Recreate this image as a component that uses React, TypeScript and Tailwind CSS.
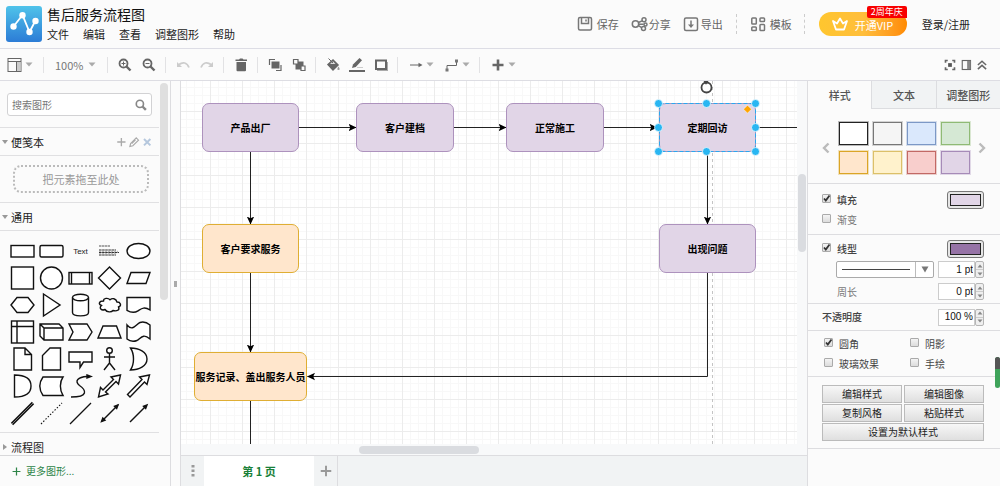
import { useState } from 'react';
import type { ReactNode } from 'react';

interface DiagramNode {
    label: string;
    className: string;
}

const MENUS = ['文件', '编辑', '查看', '调整图形', '帮助'];

const NODES: DiagramNode[] = [
    { label: '产品出厂', className: 'left-[21px] top-[22px] w-[97px] bg-[#e1d5e7] border-[#ad92bd]' },
    { label: '客户建档', className: 'left-[175px] top-[22px] w-[98px] bg-[#e1d5e7] border-[#ad92bd]' },
    { label: '正常施工', className: 'left-[325px] top-[22px] w-[98px] bg-[#e1d5e7] border-[#ad92bd]' },
    { label: '定期回访', className: 'left-[478px] top-[22px] w-[97px] bg-[#e1d5e7] border-[#ad92bd]' },
    { label: '客户要求服务', className: 'left-[21px] top-[143px] w-[97px] bg-[#ffe6cc] border-[#dfae33]' },
    { label: '出现问题', className: 'left-[478px] top-[143px] w-[97px] bg-[#e1d5e7] border-[#ad92bd]' },
    { label: '服务记录、盖出服务人员', className: 'left-[13px] top-[271px] w-[113px] bg-[#ffe6cc] border-[#dfae33]' },
];

const SWATCHES = [
    { name: '白色', className: 'bg-white border-[#222] outline-[#222]/30' },
    { name: '灰色', className: 'bg-[#f5f5f5] border-[#777] outline-[#777]/30' },
    { name: '蓝色', className: 'bg-[#dae8fc] border-[#7c98c6] outline-[#7c98c6]/30' },
    { name: '绿色', className: 'bg-[#d5e8d4] border-[#8fba75] outline-[#8fba75]/30' },
    { name: '橙色', className: 'bg-[#ffe6cc] border-[#dba526] outline-[#dba526]/30' },
    { name: '黄色', className: 'bg-[#fff2cc] border-[#dcc069] outline-[#dcc069]/30' },
    { name: '红色', className: 'bg-[#f8cecc] border-[#c26965] outline-[#c26965]/30' },
    { name: '紫色', className: 'bg-[#e1d5e7] border-[#a68bb8] outline-[#a68bb8]/30' },
];

// Every drawing sits in a 29x27 cell
const SHAPES: ReactNode[] = [
    <rect x="3" y="8.5" width="23" height="11.5" />,
    <rect x="3" y="8.5" width="23" height="11.5" rx="1.5" />,
    <text x="14.5" y="17" textAnchor="middle" fontSize="8" fill="#222" stroke="none" fontFamily="Liberation Sans, sans-serif">Text</text>,
    <g strokeWidth="1.200">
        <path d="M4 9h11" stroke="#555" strokeDasharray="2.500 .5" />
        <path d="M4 13h17M4 15.500h20M4 18h17" stroke="#333" strokeDasharray="2.600 .5" />
        <path d="M4 14.300h19M4 16.800h18" stroke="#999" strokeDasharray="2.200 .8" strokeWidth=".8" />
    </g>,
    <ellipse cx="14.5" cy="14" rx="11.500" ry="7.500" />,
    <rect x="3.5" y="3" width="22" height="22" />,
    <circle cx="14.5" cy="14" r="11" />,
    <g>
        <rect x="3" y="8.500" width="23" height="11.500" />
        <path d="M5.500 8.500v11.500M23.500 8.500v11.500" />
    </g>,
    <path d="M14.500 3L25.500 14 14.500 25 3.500 14z" />,
    <path d="M3 19.500L7 8.500h19l-4 11z" />,
    <path d="M3 14l6-7.500h11L26 14l-6 7.500H9z" />,
    <path d="M6.500 3L23 14 6.500 25z" />,
    <g>
        <path d="M6.500 6.500v15c0 4.500 16 4.500 16 0v-15" />
        <ellipse cx="14.5" cy="6.5" rx="8" ry="3.300" />
    </g>,
    <path d="M8.500 10C4 10 3 13 6.500 14.500 3.500 17 6.500 20 10 18.500c2 3 6.500 3 8 1 4 1 7-.5 5.500-3.500 3.500-1.500 2-5-1.500-5 -1-4-5-4-7-2.200C13 6.500 8.500 7 8.500 10z" />,
    <path d="M3 6.500h23V19c-6-4-9-1-12 .8-3 2-7 2-11-.5z" />,
    <g>
        <rect x="3.500" y="3" width="22" height="22" />
        <path d="M9 3v22M3.500 8.500h22" />
    </g>,
    <path d="M3 6h19l4 4v12H7l-4-4zM3 6l4 4h19M7 10v12" />,
    <path d="M3 6h18l5 8-5 8H3l4-8z" />,
    <path d="M3 20L8 8h13.500L26 20z" />,
    <path d="M3 7c6 7 9-1 13-2.500 4-1.200 7 0 10 2.500v14c-7-6-9-1-13 1.500-4 1.500-7 1-10-1.500z" />,
    <path d="M6 3h11l6.500 6.500V25H6zM17 3v6.500h6.500" />,
    <path d="M13 3h10.500v22H5.500V10.500z" />,
    <path d="M3 7h23v10H17.500l-3.500 5.500V17H3z" />,
    <g>
        <circle cx="14.5" cy="5.500" r="2.800" />
        <path d="M14.500 8.500V18M9 12h11M14.500 18L9 25M14.500 18l5.500 7" />
    </g>,
    <path d="M6.500 3C15 3 23 7 23 14S15 25 6.500 25c4-6 4-16 0-22z" />,
    <path d="M6.500 3C17 3 23 7 23 14S17 25 6.500 25z" />,
    <path d="M6 5h20c-3.500 5-3.500 13 0 18.500H6c-4-6-4-13 0-18.500z" />,
    <g>
        <path d="M5 25c18 0 15-7 8.500-11.500C8 9 12 5 21 4.500" fill="none" />
        <path d="M21 3l4 1.500-4 1.500z" fill="#111" />
    </g>,
    <path d="M25.500 3l-2 9-2.500-2.500L10.500 20l2.500 2-9.500 3 2-9.500 2.500 2.500L18.500 7.500 16 5z" />,
    <path d="M25.500 3l-2.500 9.500-2.500-2.500L6 25l-2.500-2.500L18 7.500 15.500 5z" />,
    <g>
        <path d="M4 25L25 4" strokeWidth="3.200" />
        <path d="M4 25L25 4" stroke="#999" strokeWidth=".8" />
    </g>,
    <path d="M4 25L25 4" strokeDasharray="1.500 1.700" strokeWidth="1.100" />,
    <path d="M4 25L25 4" strokeWidth="1.200" />,
    <g>
        <path d="M7 22L23 6" />
        <path d="M23 6l-1.300 3.500-2.200-2.200zM6.500 22.500l1.300-3.500 2.200 2.200z" fill="#111" />
    </g>,
    <g>
        <path d="M6 23L22 7" />
        <path d="M23 6l-1.300 3.500-2.200-2.200z" fill="#111" />
    </g>,
];

const Icon = ({ children, className = 'size-4' }: { children: ReactNode; className?: string }) => (
    <svg viewBox="0 0 16 16" className={className} fill="none" stroke="#666" strokeWidth="1.5">
        {children}
    </svg>
);

const Caret = () => (
    <svg viewBox="0 0 8 5" className="h-[5px] w-2 shrink-0" fill="#aaa">
        <path d="M.500.500h7L4 4.500z" />
    </svg>
);

const ToolButton = ({ label, children }: { label: string; children: ReactNode }) => (
    <button aria-label={label} className="flex h-6 w-6 items-center justify-center">
        {children}
    </button>
);

const DropButton = ({ label, children }: { label: string; children: ReactNode }) => (
    <button aria-label={label} className="flex h-6 w-9 items-center gap-[2px] pl-[5px]">
        {children}
        <Caret />
    </button>
);

const Divider = () => <span className="ml-1 mr-[5px] h-4 w-px bg-[#e2e2e4]" />;

const HeaderDivider = () => <span className="h-5 border-l border-dashed border-[#ccc]" />;

const HeaderButton = ({ label, className, children }: { label: string; className: string; children: ReactNode }) => (
    <button className={`flex items-center text-[11px] leading-4 text-[#666] ${className}`}>
        {children}
        {label}
    </button>
);

const Check = ({ label, defaultChecked = false, className = 'text-[#444]' }: { label: string; defaultChecked?: boolean; className?: string }) => (
    <label className={`flex h-5 items-center gap-[6px] text-[10px] leading-4 ${className}`}>
        <span className="relative -mt-1 size-[9px]">
            <input
                type="checkbox"
                defaultChecked={defaultChecked}
                className="peer block size-[9px] appearance-none rounded-[1px] border border-[#aaa] bg-linear-to-b from-[#f4f4f4] to-[#dcdcdc]"
            />
            <svg viewBox="0 0 9 9" className="pointer-events-none absolute inset-0 hidden size-[9px] peer-checked:block" fill="none" stroke="#333" strokeWidth="1.800">
                <path d="M2 4.500l1.800 2L7.500 1.500" />
            </svg>
        </span>
        {label}
    </label>
);

const Stepper = ({ label, value }: { label: string; value: string }) => (
    <div className="flex h-[17px]">
        <input
            aria-label={label}
            defaultValue={value}
            className="w-[37px] border border-[#ccc] bg-white pr-px text-right font-['Liberation_Sans',sans-serif] text-[10px] leading-4 text-[#111] outline-none"
        />
        <div className="flex w-[9px] flex-col overflow-hidden rounded-[2px] border border-[#b5b5b5] bg-[#efefef]">
            <button aria-label={`${label} +`} className="flex flex-1 items-center justify-center border-b border-[#ccc]">
                <svg viewBox="0 0 6 4" className="h-1 w-[6px]" fill="#888"><path d="M3 .5L5.500 3.500h-5z" /></svg>
            </button>
            <button aria-label={`${label} -`} className="flex flex-1 items-center justify-center">
                <svg viewBox="0 0 6 4" className="h-1 w-[6px]" fill="#888"><path d="M.5.5h5L3 3.500z" /></svg>
            </button>
        </div>
    </div>
);

const ColorButton = ({ label, className }: { label: string; className: string }) => (
    <button aria-label={label} className="h-[18px] w-[37px] rounded-[3px] border border-[#777] bg-[#e6e6e6] p-[2px]">
        <span className={`block h-full border border-[#222] ${className}`} />
    </button>
);

const PanelButton = ({ label, className = '' }: { label: string; className?: string }) => (
    <button className={`h-[18px] border border-[#bbb] bg-linear-to-b from-[#f7f7f7] to-[#dfdfdf] text-[10px] leading-4 text-[#222] ${className}`}>
        {label}
    </button>
);

const Header = () => (
    <header className="flex h-[49px] shrink-0 items-center border-b border-[#dddde5] pl-[6px] pr-[30px]">
        <svg viewBox="0 0 36 36" className="size-9 shrink-0">
            <defs>
                <linearGradient id="logo" x1="0" y1="0" x2="0" y2="1">
                    <stop offset="0" stopColor="#4fc3ea" />
                    <stop offset="1" stopColor="#2c7cd6" />
                </linearGradient>
            </defs>
            <rect width="36" height="36" rx="3" fill="url(#logo)" />
            <path d="M7.500 20.500l9-11.500 7 17 6-11.500" fill="none" stroke="#fff" strokeWidth="1.800" />
            <g fill="#fff">
                <circle cx="7.500" cy="20.500" r="3.200" />
                <circle cx="16.500" cy="9.300" r="3.200" />
                <circle cx="23.500" cy="26" r="3.200" />
                <circle cx="29.500" cy="15" r="3.200" />
            </g>
        </svg>
        <div className="ml-[5px] pb-px">
            <h1 className="text-[14px] leading-5 text-[#111]">售后服务流程图</h1>
            <nav className="flex gap-[14px]">
                {MENUS.map((menu) => (
                    <button key={menu} className="text-[11px] leading-5 text-[#222]">{menu}</button>
                ))}
            </nav>
        </div>
        <div className="ml-auto flex items-center">
            <HeaderButton label="保存" className="mr-3 gap-1">
                <Icon>
                    <rect x="1.500" y="1.500" width="13" height="12.500" rx="1.500" stroke="#777" />
                    <path d="M4.500 2v5.500h7V2M9 3.500v2" stroke="#777" />
                </Icon>
            </HeaderButton>
            <HeaderButton label="分享" className="mr-3 gap-px">
                <svg viewBox="0 0 17 16" className="h-4 w-[17px]" fill="none" stroke="#777" strokeWidth="1.500">
                    <circle cx="4.500" cy="8" r="3.200" />
                    <circle cx="13" cy="3.800" r="2" />
                    <circle cx="14.500" cy="8.500" r="1.500" />
                    <circle cx="12.500" cy="12.500" r="2" />
                    <path d="M7.500 6.500l3.500-1.700M7.700 8.200h5M7.500 9.700l3.200 2" />
                </svg>
            </HeaderButton>
            <HeaderButton label="导出" className="mr-[13px] gap-[2px]">
                <Icon>
                    <rect x="1.500" y="2" width="13" height="12.500" rx="1.500" stroke="#777" />
                    <path d="M8 4.500v5" stroke="#777" />
                    <path d="M5 8.500h6L8 12z" fill="#777" stroke="none" />
                </Icon>
            </HeaderButton>
            <HeaderDivider />
            <HeaderButton label="模板" className="ml-[13px] mr-3 gap-1">
                <Icon>
                    <g stroke="#777">
                        <rect x="1.800" y="2" width="4.500" height="6" rx=".8" />
                        <rect x="10" y="2" width="4.500" height="3.500" rx=".8" />
                        <rect x="1.800" y="11" width="4.500" height="3.500" rx=".8" />
                        <rect x="10" y="8.500" width="4.500" height="6" rx=".8" />
                    </g>
                </Icon>
            </HeaderButton>
            <HeaderDivider />
            <button className="relative ml-[14px] mr-[15px] flex h-6 w-[88px] items-center rounded-full bg-linear-to-r from-[#ffc62e] via-[#ffbe3b] to-[#ff8a00] pl-3 text-[11px] leading-3 text-white">
                <svg viewBox="0 0 18 16" className="mr-[6px] h-4 w-[18px]" fill="none" stroke="#fff" strokeWidth="1.800" strokeLinejoin="round">
                    <path d="M2 5l3 8.500h8L16 5l-4 2.500L9 2.500 6 7.500z" />
                </svg>
                <span className="pt-[2px]">开通VIP</span>
                <span className="absolute -top-[6px] right-0 h-3 w-10 rounded-t-[2px] rounded-bl-[2px] bg-[#f80000] text-center text-[9px] leading-3">2周年庆</span>
            </button>
            <a href="#login" className="text-[11px] leading-4 text-[#222]">登录/注册</a>
        </div>
    </header>
);

const Toolbar = () => (
    <div className="flex h-8 shrink-0 items-center border-b border-[#dddde3] pl-[6px] pr-3">
        <button aria-label="布局" className="flex h-6 w-[33px] items-center gap-[3px]">
            <Icon>
                <rect x="2" y="1.500" width="13" height="13" strokeWidth="1" />
                <path d="M2 4.500h13M10.500 4.500v10" strokeWidth="1" />
                <path d="M11 5h3.500v9H11z" fill="#ccc" stroke="none" />
            </Icon>
            <Caret />
        </button>
        <Divider />
        <button className="flex h-6 w-[54px] items-center gap-[5px] pl-[6px] text-[11px] leading-4 text-[#777]">
            100%
            <Caret />
        </button>
        <Divider />
        <ToolButton label="放大">
            <Icon>
                <circle cx="6.500" cy="6.500" r="4" strokeWidth="1.800" />
                <path d="M9.500 9.500l4 4" strokeWidth="2.400" />
                <path d="M4.500 6.500h4M6.500 4.500v4" strokeWidth="1" />
            </Icon>
        </ToolButton>
        <ToolButton label="缩小">
            <Icon>
                <circle cx="6.500" cy="6.500" r="4" strokeWidth="1.800" />
                <path d="M9.500 9.500l4 4" strokeWidth="2.400" />
                <path d="M4.500 6.500h4" strokeWidth="1" />
            </Icon>
        </ToolButton>
        <Divider />
        <ToolButton label="撤销">
            <Icon>
                <path d="M4 7.500c4-3 8-2 10 3" stroke="#ccc" strokeWidth="1.800" />
                <path d="M2 5v5h5z" fill="#ccc" stroke="none" />
            </Icon>
        </ToolButton>
        <ToolButton label="重做">
            <Icon>
                <path d="M12 7.500c-4-3-8-2-10 3" stroke="#ccc" strokeWidth="1.800" />
                <path d="M14 5v5H9z" fill="#ccc" stroke="none" />
            </Icon>
        </ToolButton>
        <Divider />
        <ToolButton label="删除">
            <Icon>
                <path d="M2.500 2.500h3.500l1-1h2.500l1 1H14V4H2.500zM3.500 5h9.500v8.200a1 1 0 0 1-1 1h-7.500a1 1 0 0 1-1-1z" fill="#666" stroke="none" />
            </Icon>
        </ToolButton>
        <Divider />
        <ToolButton label="置前">
            <Icon>
                <path d="M4.500 4.500h8v7h-8z" fill="#666" stroke="none" />
                <path d="M2.500 8V2.500H8M9 13.500h5V8" strokeWidth="1.200" />
            </Icon>
        </ToolButton>
        <ToolButton label="置后">
            <Icon>
                <path d="M4.500 4.500h8v8h-8z" fill="#666" stroke="none" />
                <path d="M2.500 2.500H7v4.500H2.500zM10 9h4v4.500h-4z" fill="#fbfbfb" strokeWidth="1.200" />
            </Icon>
        </ToolButton>
        <Divider />
        <ToolButton label="填充颜色">
            <Icon>
                <path d="M3 7.500L8 3l5 5-5 5z" fill="#666" />
                <path d="M5 7L8 4.200 10.500 7z" fill="#ddd" stroke="none" />
                <path d="M3.500 1.500L8 6" strokeWidth="1" />
                <path d="M13.500 9.500c1.600 2.500 1.500 3.500 0 3.500s-1.600-1 0-3.500z" fill="#999" stroke="none" />
            </Icon>
        </ToolButton>
        <ToolButton label="线条颜色">
            <Icon>
                <path d="M3 11l1-3.500L10.500 1l2.500 2.200L6.800 10z" fill="#666" stroke="none" />
                <path d="M8 10.500h6" stroke="#ccc" strokeWidth="1" />
                <path d="M0 14h16" strokeWidth="2" />
            </Icon>
        </ToolButton>
        <ToolButton label="阴影">
            <Icon>
                <path d="M4 5h11v9H4z" fill="#aaa" stroke="none" />
                <rect x="3" y="3.500" width="10" height="8.500" fill="#fbfbfb" strokeWidth="2" />
            </Icon>
        </ToolButton>
        <Divider />
        <DropButton label="连接">
            <Icon>
                <path d="M2 8h9" strokeWidth="1" />
                <path d="M10.500 5.800L14.500 8l-4 2.200z" fill="#666" stroke="none" />
            </Icon>
        </DropButton>
        <DropButton label="路径">
            <Icon>
                <path d="M3 13V8.500h9.500V4" strokeWidth="1" />
                <path d="M1.500 11.500h3v3h-3zM11 2.500h3v3h-3z" fill="#777" stroke="none" />
            </Icon>
        </DropButton>
        <Divider />
        <DropButton label="插入">
            <Icon>
                <path d="M2.500 8h11M8 2.500v11" strokeWidth="2.600" />
            </Icon>
        </DropButton>
        <div className="ml-auto flex gap-1">
            <button aria-label="全屏">
                <Icon className="size-3">
                    <path d="M2 5V2h3M11 2h3v3M14 11v3h-3M5 14H2v-3" strokeWidth="2.200" />
                    <path d="M5.500 5.500h5v5h-5z" fill="#555" stroke="none" />
                </Icon>
            </button>
            <button aria-label="格式面板">
                <Icon className="size-3">
                    <rect x="3" y="2" width="11" height="12" />
                    <path d="M9.500 2.500H14v11H9.500z" fill="#888" stroke="none" />
                </Icon>
            </button>
            <button aria-label="收起">
                <Icon className="size-3">
                    <path d="M2.500 8L8 3l5.500 5M2.500 13.500L8 8.500l5.500 5" strokeWidth="2" />
                </Icon>
            </button>
        </div>
    </div>
);

const SectionTitle = ({ label, open = true, children }: { label: string; open?: boolean; children?: ReactNode }) => (
    <div className="flex h-7 items-center pl-[2px] pr-[6px] text-[11px] leading-4 text-[#222]">
        <button className="flex items-center gap-[3px]">
            <svg viewBox="0 0 6 6" className="size-[6px]" fill="#999">
                <path d={open ? 'M0 1h6L3 5z' : 'M1 0l4 3-4 3z'} />
            </svg>
            {label}
        </button>
        {children}
    </div>
);

const Sidebar = () => (
    <aside className="flex w-[171px] shrink-0 flex-col border-r border-[#dddde0]">
        <div className="flex min-h-0 flex-1 overflow-hidden">
            <div className="w-[159px] divide-y divide-[#e0e0e2]">
                <div className="px-[7px] pb-[11px] pt-3">
                    <div className="flex h-[23px] items-center rounded-[3px] border border-[#d2d2d4] bg-white px-1">
                        <input aria-label="搜索图形" placeholder="搜索图形" className="min-w-0 flex-1 text-[10px] leading-4 outline-none placeholder:text-[#777]" />
                        <Icon className="size-3">
                            <circle cx="6.500" cy="6.500" r="4.800" stroke="#888" strokeWidth="2.200" />
                            <path d="M10 10l4.500 4.500" stroke="#888" strokeWidth="3.200" />
                        </Icon>
                    </div>
                </div>
                <SectionTitle label="便笺本">
                    <div className="ml-auto flex gap-px">
                        <button aria-label="添加">
                            <Icon className="size-3"><path d="M3 8h11M8.500 2.500v11" stroke="#aaa" strokeWidth="1.800" /></Icon>
                        </button>
                        <button aria-label="编辑">
                            <Icon className="size-3"><path d="M2.500 14l1-4L11 2.500 14 5.500 6.500 13zM10 5l-5 5" stroke="#aaa" /></Icon>
                        </button>
                        <button aria-label="关闭">
                            <Icon className="size-3"><path d="M4 4l8.500 8.500M12.500 4L4 12.500" stroke="#b5c7dd" strokeWidth="2.600" /></Icon>
                        </button>
                    </div>
                </SectionTitle>
                <div className="py-[9px] pl-[13px] pr-[10px]">
                    <div className="flex h-7 items-center justify-center rounded-[8px] border-2 border-dotted border-[#bbb] text-[11px] leading-4 text-[#999]">
                        把元素拖至此处
                    </div>
                </div>
                <SectionTitle label="通用" />
                <div className="grid grid-cols-[repeat(5,29px)] pb-[6px] pl-2 pt-[6px]">
                    {SHAPES.map((shape, i) => (
                        <svg key={i} viewBox="0 0 29 27" className="h-[27px] w-[29px] overflow-visible" fill="#fff" stroke="#111" strokeWidth="1.400">
                            {shape}
                        </svg>
                    ))}
                </div>
                <SectionTitle label="流程图" open={false} />
            </div>
            <div className="ml-px mt-[2px] h-[217px] w-2 rounded-full bg-[#dfdfdf]" />
        </div>
        <button className="flex h-[31px] shrink-0 items-center gap-[5px] border-t border-[#d8d8da] pl-3 text-[10px] leading-4 text-[#2e8548]">
            <Icon className="size-[9px]"><path d="M1 8h14M8 1v14" stroke="#2e8548" strokeWidth="2.200" /></Icon>
            更多图形...
        </button>
    </aside>
);

const Selection = () => (
    <g>
        <rect x="478.500" y="22.500" width="96" height="48" fill="none" stroke="#29a8f0" strokeDasharray="4 2" />
        {[22.5, 46.5, 70.5].map((y) =>
            [477.5, 525.5, 574.5].map((x) =>
                x === 525.5 && y === 46.5 ? null : <circle key={`${x}-${y}`} cx={x} cy={y} r="4" fill="#29b6f2" stroke="#fff" strokeWidth=".7" />
            )
        )}
        <path d="M566.500 24.200l4 4-4 4-4-4z" fill="#ffa500" stroke="#fff" strokeWidth=".5" />
        <circle cx="525.500" cy="6.500" r="5" fill="#fff" stroke="#444" strokeWidth="1.800" />
        <path d="M522.500 0h5l-2.500 3.800z" fill="#444" />
    </g>
);

const Canvas = () => (
    <div className="relative min-w-0 flex-1 overflow-hidden bg-white">
        <svg className="absolute inset-0 h-full w-full">
            <defs>
                <pattern id="grid" x="29" y="30" width="32" height="32" patternUnits="userSpaceOnUse">
                    <path d="M8.500 0v32M16.500 0v32M24.500 0v32M0 8.500h32M0 16.500h32M0 24.500h32" stroke="#f8f8f8" />
                    <path d="M.5 0v32M0 .5h32" stroke="#ececec" />
                </pattern>
                <marker id="arrow" viewBox="0 0 8 8" refX="7.500" refY="4" markerWidth="8" markerHeight="8" markerUnits="userSpaceOnUse" orient="auto">
                    <path d="M0 .3L8 4 0 7.700 1.800 4z" fill="#000" />
                </marker>
            </defs>
            <rect width="100%" height="100%" fill="url(#grid)" />
            <path d="M531.500 0v500" stroke="#c4c4c4" strokeDasharray="3 3" />
            <g fill="none" stroke="#222">
                <path d="M118 46.500h57" markerEnd="url(#arrow)" />
                <path d="M273 46.500h52" markerEnd="url(#arrow)" />
                <path d="M423 46.500h53" markerEnd="url(#arrow)" />
                <path d="M575 46.500h500" />
                <path d="M69.500 71v72" markerEnd="url(#arrow)" />
                <path d="M69.500 192v79" markerEnd="url(#arrow)" />
                <path d="M69.500 320v200" />
                <path d="M526.500 71v72" markerEnd="url(#arrow)" />
                <path d="M526.500 192v103.500H126.500" markerEnd="url(#arrow)" />
            </g>
        </svg>
        {NODES.map((node) => (
            <div
                key={node.label}
                className={`absolute flex h-[49px] items-center justify-center whitespace-nowrap rounded-[7px] border text-[10px] font-bold leading-4 text-black ${node.className}`}
            >
                {node.label}
            </div>
        ))}
        <svg className="pointer-events-none absolute inset-0 h-full w-full">
            <Selection />
        </svg>
    </div>
);

const FormatPanel = () => {
    const [tab, setTab] = useState('样式');

    return (
        <aside className="flex w-[193px] shrink-0 flex-col border-l border-[#dddde0]">
            <div className="flex h-7 shrink-0">
                {['样式', '文本', '调整图形'].map((name) => (
                    <button
                        key={name}
                        onClick={() => setTab(name)}
                        className={`flex-1 text-[11px] font-medium leading-4 text-[#555] ${tab === name ? '' : 'border-b border-l border-[#dcdde0] bg-[#f1f3f4]'}`}
                    >
                        {name}
                    </button>
                ))}
            </div>
            <div className="flex items-center justify-between border-b border-[#dddde0] px-[14px] pb-[9px] pt-[13px]">
                <button aria-label="上一页">
                    <svg viewBox="0 0 8 12" className="h-3 w-2" fill="none" stroke="#bbb" strokeWidth="2.400"><path d="M6.500 1.500L2 6l4.500 4.500" /></svg>
                </button>
                <div className="grid grid-cols-4 gap-x-[5px] gap-y-[6px]">
                    {SWATCHES.map((s) => (
                        <button key={s.name} aria-label={s.name} className={`h-[23px] w-[29px] border outline-1 ${s.className}`} />
                    ))}
                </div>
                <button aria-label="下一页">
                    <svg viewBox="0 0 8 12" className="h-3 w-2" fill="none" stroke="#bbb" strokeWidth="2.400"><path d="M1.500 1.500L6 6l-4.500 4.500" /></svg>
                </button>
            </div>
            <div className="border-b border-[#dddde0] pb-1 pl-[14px] pr-4 pt-[6px]">
                <div className="flex items-center justify-between">
                    <Check label="填充" defaultChecked className="font-medium text-[#444]" />
                    <ColorButton label="填充颜色" className="bg-[#e1d5e7]" />
                </div>
                <Check label="渐变" className="text-[#777]" />
            </div>
            <div className="border-b border-[#dddde0] pb-[3px] pl-[14px] pr-4 pt-1">
                <div className="flex items-center justify-between">
                    <Check label="线型" defaultChecked className="font-medium text-[#444]" />
                    <ColorButton label="线条颜色" className="bg-[#9673a6]" />
                </div>
                <div className="mt-[2px] flex justify-between pl-[14px]">
                    <button aria-label="线条样式" className="flex h-[17px] w-[98px] items-center rounded-[2px] border border-[#aaa] bg-white">
                        <span className="mx-[5px] h-px flex-1 bg-[#444]" />
                        <span className="flex h-full w-[18px] items-center justify-center border-l border-[#bbb]">
                            <svg viewBox="0 0 8 7" className="h-[7px] w-2" fill="#777"><path d="M.5.500h7L4 6.500z" /></svg>
                        </span>
                    </button>
                    <Stepper label="线宽" value="1 pt" />
                </div>
                <div className="mt-[5px] flex items-center justify-between pl-[15px]">
                    <span className="text-[10px] leading-4 text-[#777]">周长</span>
                    <Stepper label="周长" value="0 pt" />
                </div>
            </div>
            <div className="flex h-[27px] items-center justify-between border-b border-[#dddde0] pl-[14px] pr-4">
                <span className="text-[10px] font-medium leading-4 text-[#444]">不透明度</span>
                <Stepper label="不透明度" value="100 %" />
            </div>
            <div className="grid grid-cols-2 border-b border-[#dddde0] pb-[2px] pl-4 pr-1 pt-[3px]">
                <Check label="圆角" defaultChecked />
                <Check label="阴影" />
                <Check label="玻璃效果" />
                <Check label="手绘" />
            </div>
            <div className="grid grid-cols-2 gap-x-[2px] gap-y-px border-b border-[#dddde0] pb-[7px] pl-[14px] pr-4 pt-2">
                <PanelButton label="编辑样式" />
                <PanelButton label="编辑图像" />
                <PanelButton label="复制风格" />
                <PanelButton label="粘贴样式" />
                <PanelButton label="设置为默认样式" className="col-span-2" />
            </div>
        </aside>
    );
};

export default function App() {
    return (
        <div className="relative flex h-screen flex-col overflow-hidden bg-[#fbfbfb] font-['Noto_Sans_CJK_SC',sans-serif]">
            <Header />
            <Toolbar />
            <div className="flex min-h-0 flex-1">
                <Sidebar />
                <div className="flex w-[10px] shrink-0 items-center justify-center border-r border-[#dddde0]">
                    <span className="h-[6px] w-[3px] bg-[#aaa]" />
                </div>
                <main className="flex min-w-0 flex-1 flex-col">
                    <div className="flex min-h-0 flex-1">
                        <Canvas />
                        <div className="w-[10px] shrink-0 bg-[#f8f9fa] px-px pt-[93px]">
                            <div className="h-[78px] rounded-full bg-[#dadce0]" />
                        </div>
                    </div>
                    <div className="h-[11px] shrink-0 bg-[#f8f9fa] pl-[178px] pt-[2px]">
                        <div className="h-2 w-[120px] rounded-full bg-[#dadce0]" />
                    </div>
                    <footer className="flex h-[31px] shrink-0 border-t border-[#dddde0] bg-[#f1f3f4]">
                        <button aria-label="页面" className="flex w-[23px] items-center justify-center">
                            <svg viewBox="0 0 4 12" className="h-3 w-1" fill="#999">
                                <path d="M.5 0h3v2.500h-3zM.5 4.500h3V7h-3zM.5 9h3v2.500h-3z" />
                            </svg>
                        </button>
                        <button className="w-[110px] bg-white text-[11px] font-bold leading-4 text-[#188038]">第 1 页</button>
                        <button aria-label="插入页面" className="flex w-6 items-center justify-center border-r border-[#dddde0]">
                            <Icon className="size-3"><path d="M1 8h14M8 1v14" stroke="#999" strokeWidth="2.600" /></Icon>
                        </button>
                    </footer>
                </main>
                <FormatPanel />
            </div>
            <div className="absolute right-0 top-[357px] h-[31px] w-[5px] overflow-hidden rounded-full bg-[#3fa35a]">
                <div className="h-3 bg-[#555]" />
            </div>
        </div>
    );
}
